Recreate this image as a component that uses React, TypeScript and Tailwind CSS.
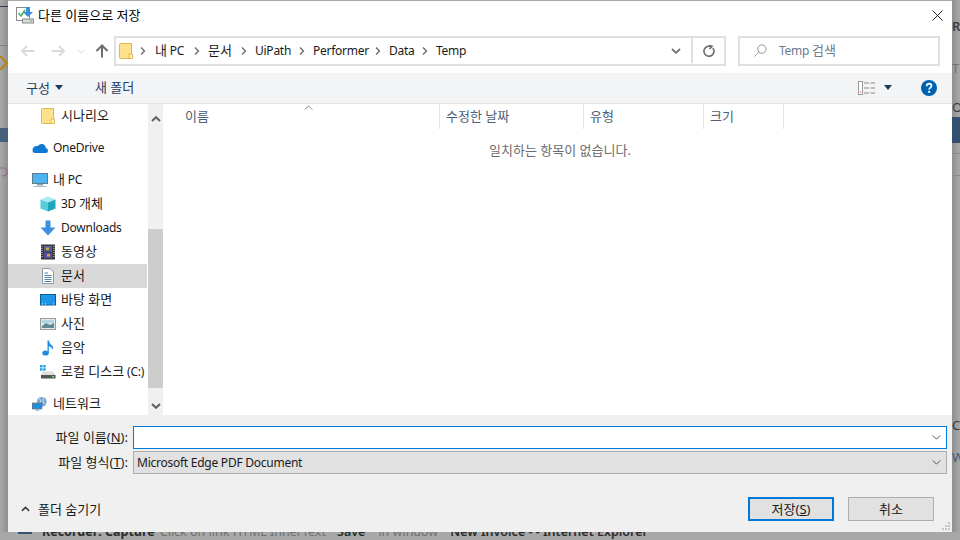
import type { ReactNode } from "react";

const Ko = ({ children }: { children: ReactNode }) => <span className="text-[13px] tracking-normal">{children}</span>;

function FolderIcon({ className }: { className?: string }) {
  return (
    <svg viewBox="0 0 14 16" className={className}>
      <path d="M0.5 1.5 Q0.5 0.5 1.5 0.5 H12.5 V15.5 H1.5 Q0.5 15.5 0.5 14.5 Z" fill="#fde18c" stroke="#e2b84e" />
      <path d="M10 15.5 V11 H13.5 V15.5 Z" fill="#fff2c2" stroke="#e2b84e" />
    </svg>
  );
}

function SaveIcon() {
  return (
    <svg viewBox="0 0 18 18" className="h-[18px] w-[18px] shrink-0">
      <rect x="0.5" y="1.5" width="13" height="13" fill="#fff" stroke="#8a8a8a" />
      <path d="M2.5 7 L5 10 L9 4" fill="none" stroke="#46b35a" strokeWidth="1.6" />
      <path d="M10 1 H14 V6 H17 L12 11 L7 6 H10 Z" fill="#3b8fd9" />
      <rect x="6.5" y="13" width="11" height="4" fill="#d8d8d8" stroke="#8a8a8a" />
      <rect x="14" y="14.5" width="2" height="1" fill="#4fd05f" />
    </svg>
  );
}

const OneDriveIcon = (
  <svg viewBox="0 0 16 12" className="h-3 w-4">
    <path d="M3 11 H14 Q16 11 16 8.5 Q16 6.5 14 6.2 Q13.4 2.2 9.8 2 Q7.4 1.8 6 4 Q1 3.4 0.5 8 Q0.5 11 3 11 Z" fill="#0f78d4" />
  </svg>
);

const PcIcon = (
  <svg viewBox="0 0 16 16" className="h-4 w-4">
    <rect x="0.5" y="1.5" width="15" height="10" fill="#4db5f2" stroke="#5f7d90" />
    <rect x="5" y="12" width="6" height="1.5" fill="#8fa3ad" />
    <rect x="2" y="14" width="12" height="1" fill="#a9b7be" />
  </svg>
);

const CubeIcon = (
  <svg viewBox="0 0 16 16" className="h-4 w-4">
    <path d="M8 0.5 L15.5 3.5 L8 6.5 L0.5 3.5 Z" fill="#a7ecf3" />
    <path d="M0.5 3.5 L8 6.5 V15.5 L0.5 12.5 Z" fill="#58cbd9" />
    <path d="M15.5 3.5 L8 6.5 V15.5 L15.5 12.5 Z" fill="#1ea5b9" />
  </svg>
);

const DownloadIcon = (
  <svg viewBox="0 0 16 16" className="h-4 w-4">
    <path d="M5.5 0.5 H10.5 V7.5 H15.5 L8 15.5 L0.5 7.5 H5.5 Z" fill="#3d8fe0" />
  </svg>
);

const FilmIcon = (
  <svg viewBox="0 0 14 16" className="h-4 w-[14px]">
    <rect x="0" y="0.5" width="14" height="15" fill="#3a3a3a" />
    <rect x="3" y="2" width="8" height="5.5" fill="#4a63a8" />
    <rect x="3" y="8.5" width="8" height="5.5" fill="#5a4aa0" />
    <rect x="5" y="3.5" width="3" height="2.5" fill="#d6a838" />
    <rect x="6" y="10" width="3" height="2.5" fill="#d6a838" />
    <path d="M1 2 V14 M13 2 V14" stroke="#cfcfcf" strokeWidth="1" strokeDasharray="1 1" />
  </svg>
);

const DocIcon = (
  <svg viewBox="0 0 14 16" className="h-4 w-[14px]">
    <path d="M1.5 0.5 H9 L12.5 4 V15.5 H1.5 Z" fill="#fff" stroke="#8c9aa5" />
    <path d="M3.5 5 H7 M3.5 7.5 H10.5 M3.5 9.5 H10.5 M3.5 11.5 H10.5 M3.5 13.5 H10.5" stroke="#5a7f9c" />
  </svg>
);

const DesktopIcon = (
  <svg viewBox="0 0 16 14" className="h-[14px] w-4">
    <rect x="0.5" y="1.5" width="15" height="10.5" fill="#1d96e8" stroke="#0b5e9e" />
    <path d="M2 11 H3 M5 11 H6 M13 11 H14" stroke="#e8f4fc" />
  </svg>
);

const PictureIcon = (
  <svg viewBox="0 0 16 14" className="h-[14px] w-4">
    <rect x="0.5" y="1.5" width="15" height="11" fill="#dbe8ee" stroke="#9a9a9a" />
    <path d="M2 9 L6 6 L10 8 L14 6 V11 H2 Z" fill="#5d8a8f" />
    <rect x="2" y="3" width="12" height="3" fill="#b5d4e6" />
  </svg>
);

const MusicIcon = (
  <svg viewBox="0 0 14 16" className="h-4 w-[14px]">
    <ellipse cx="4.5" cy="13" rx="3.2" ry="2.6" fill="#1d8ce0" />
    <path d="M6.5 13 V0.5 H7.8 Q8.4 4 11.5 6 Q12.8 7.5 11.8 9.5 Q11.4 7.5 7.8 6 V13 Z" fill="#1d8ce0" />
  </svg>
);

const DiskIcon = (
  <svg viewBox="0 0 16 14" className="h-[14px] w-4">
    <rect x="0" y="0" width="2.5" height="2.5" fill="#22a5e8" />
    <rect x="3.2" y="0" width="2.5" height="2.5" fill="#22a5e8" />
    <rect x="0" y="3.2" width="2.5" height="2.5" fill="#22a5e8" />
    <rect x="3.2" y="3.2" width="2.5" height="2.5" fill="#22a5e8" />
    <path d="M3 6.5 H13 L15.5 10 H1 Z" fill="#dfdfdf" />
    <rect x="1" y="10" width="14.5" height="3.5" fill="#555" />
    <rect x="12" y="11" width="2" height="1.5" fill="#5fe05f" />
  </svg>
);

const NetworkIcon = (
  <svg viewBox="0 0 18 16" className="h-4 w-[18px]">
    <circle cx="11" cy="5.5" r="5.5" fill="#7aa9d4" />
    <path d="M8 2 Q11 4 9 7 M13 1.5 Q11 5 14 8" stroke="#d7e6f2" fill="none" />
    <rect x="0.5" y="7" width="10.5" height="6.5" fill="#1f8ee0" stroke="#52738c" />
    <rect x="4" y="14" width="4" height="1.5" fill="#8fa3ad" />
  </svg>
);

interface NavRow {
  label: ReactNode;
  icon: ReactNode;
  indent?: boolean;
  gapAfter?: boolean;
  active?: boolean;
}

const NAV_ROWS: NavRow[] = [
  { label: <Ko>시나리오</Ko>, icon: <FolderIcon className="h-4 w-[14px]" />, indent: true, gapAfter: true },
  { label: "OneDrive", icon: OneDriveIcon, gapAfter: true },
  { label: <>
    <Ko>내</Ko> PC
  </>, icon: PcIcon },
  { label: <>
    3D <Ko>개체</Ko>
  </>, icon: CubeIcon, indent: true },
  { label: "Downloads", icon: DownloadIcon, indent: true },
  { label: <Ko>동영상</Ko>, icon: FilmIcon, indent: true },
  { label: <Ko>문서</Ko>, icon: DocIcon, indent: true, active: true },
  { label: <Ko>바탕 화면</Ko>, icon: DesktopIcon, indent: true },
  { label: <Ko>사진</Ko>, icon: PictureIcon, indent: true },
  { label: <Ko>음악</Ko>, icon: MusicIcon, indent: true },
  { label: <>
    <Ko>로컬 디스크</Ko> (C:)
  </>, icon: DiskIcon, indent: true, gapAfter: true },
  { label: <Ko>네트워크</Ko>, icon: NetworkIcon },
];

// widths keep the path segments on the same pixels as the real address bar
const CRUMBS: { label: ReactNode; width: string }[] = [
  { label: <>
    <Ko>내</Ko> PC
  </>, width: "w-[31px]" },
  { label: <Ko>문서</Ko>, width: "w-[25px]" },
  { label: "UiPath", width: "w-[36px]" },
  { label: "Performer", width: "w-[54px]" },
  { label: "Data", width: "w-[25px]" },
  { label: "Temp", width: "w-[30px]" },
];

function CrumbChevron() {
  return (
    <svg viewBox="0 0 6 8" className="h-2 w-1.5 shrink-0">
      <path d="M1 0.5 L4.5 4 L1 7.5" fill="none" stroke="#6d6d6d" strokeWidth="1.4" />
    </svg>
  );
}

function SmallChevron({ up, className, stroke = "#555" }: { up?: boolean; className?: string; stroke?: string }) {
  return (
    <svg viewBox="0 0 10 6" className={className}>
      <path d={up ? "M0.5 5.5 L5 1 L9.5 5.5" : "M0.5 0.5 L5 5 L9.5 0.5"} fill="none" stroke={stroke} strokeWidth="1.2" />
    </svg>
  );
}

function Sidebar() {
  return (
    <div className="flex h-[311px] w-[155px] shrink-0">
      <div className="w-[139px] overflow-hidden">
        {NAV_ROWS.map((row, i) => (
          <div
            key={i}
            className={`flex h-6 items-center gap-[5px] whitespace-nowrap pb-px text-[#1a1a1a] ${row.indent ? "pl-8" : "pl-6"} ${
              row.gapAfter ? "mb-2" : ""
            } ${row.active ? "bg-[#d9d9d9]" : ""}`}
          >
            <span className="flex h-4 w-4 shrink-0 items-center justify-center">{row.icon}</span>
            <span>{row.label}</span>
          </div>
        ))}
      </div>
      <div className="ml-px flex w-[15px] flex-col items-center bg-[#f0f0f0]">
        <div className="flex h-[18px] items-end">
          <svg viewBox="0 0 10 6" className="h-[6px] w-[10px]">
            <path d="M1 5 L5 1.2 L9 5" fill="none" stroke="#606060" strokeWidth="2" />
          </svg>
        </div>
        <div className="mt-[107px] h-[159px] w-full bg-[#cdcdcd]" />
        <div className="mt-[15px]">
          <svg viewBox="0 0 10 6" className="h-[6px] w-[10px]">
            <path d="M1 1 L5 4.8 L9 1" fill="none" stroke="#606060" strokeWidth="2" />
          </svg>
        </div>
      </div>
    </div>
  );
}

function FileList() {
  return (
    <div className="min-w-0 flex-1 bg-white">
      <div className="relative flex h-[25px] items-center text-[#4c607a]">
        <svg viewBox="0 0 10 6" className="absolute left-[141px] top-px h-[5px] w-[9px]">
          <path d="M0.5 5.5 L5 1 L9.5 5.5" fill="none" stroke="#6b6b6b" />
        </svg>
        <div className="flex h-full w-[276px] items-center pb-[2px] pl-[22px]">
          <Ko>이름</Ko>
        </div>
        <div className="flex h-full w-[144px] items-center border-l border-[#e5e5e5] pb-[2px] pl-[6px]">
          <Ko>수정한 날짜</Ko>
        </div>
        <div className="flex h-full w-[120px] items-center border-l border-[#e5e5e5] pb-[2px] pl-[6px]">
          <Ko>유형</Ko>
        </div>
        <div className="flex h-full w-[81px] items-center border-x border-[#e5e5e5] pb-[2px] pl-[6px]">
          <Ko>크기</Ko>
        </div>
      </div>
      <div className="mt-[13px] w-[794px] text-center text-[#6d6d6d]">
        <Ko>일치하는 항목이 없습니다.</Ko>
      </div>
    </div>
  );
}

function Footer() {
  return (
    <div className="flex h-[117px] flex-col bg-[#f0f0f0] pr-[5px] pt-[11px] text-[#1a1a1a]">
      <div className="flex h-[23px] items-center">
        <span className="w-[120px] whitespace-nowrap text-right">
          <Ko>파일 이름(<u>N</u>):</Ko>
        </span>
        <div className="ml-[5px] flex h-[23px] flex-1 items-center justify-end border border-[#0078d7] bg-white pr-[5px]">
          <SmallChevron className="h-[5px] w-[9px]" />
        </div>
      </div>
      <div className="mt-[2px] flex h-[23px] items-center">
        <span className="w-[120px] whitespace-nowrap text-right">
          <Ko>파일 형식(<u>T</u>):</Ko>
        </span>
        <div className="ml-[5px] flex h-[23px] flex-1 items-center justify-between border border-[#adadad] bg-[#e1e1e1] pl-[3px] pr-[5px]">
          <span>Microsoft Edge PDF Document</span>
          <SmallChevron className="h-[5px] w-[9px]" />
        </div>
      </div>
      <div className="relative mt-[23px] flex items-center justify-between">
        <div className="flex items-center gap-[8px] pl-[13px]">
          <svg viewBox="0 0 10 6" className="h-[6px] w-[9px]">
            <path d="M1 5 L5 1.2 L9 5" fill="none" stroke="#404040" strokeWidth="1.8" />
          </svg>
          <Ko>폴더 숨기기</Ko>
        </div>
        <div className="flex gap-[14px] pr-[13px]">
          <button className="h-6 w-[86px] border-2 border-[#0078d7] bg-[#e1e1e1]">
            <Ko>저장(<u>S</u>)</Ko>
          </button>
          <button className="h-6 w-[86px] border border-[#adadad] bg-[#e1e1e1]">
            <Ko>취소</Ko>
          </button>
        </div>
        <svg viewBox="0 0 9 9" className="absolute -bottom-[10px] right-[-4px] h-[9px] w-[9px]">
          <path d="M6 0 H8 V2 H6 Z M3 3 H5 V5 H3 Z M6 3 H8 V5 H6 Z M0 6 H2 V8 H0 Z M3 6 H5 V8 H3 Z M6 6 H8 V8 H6 Z" fill="#c4c4c4" />
        </svg>
      </div>
    </div>
  );
}

function Dialog() {
  return (
    <div className="flex h-[531px] w-[944px] shrink-0 flex-col bg-white">
      {/* Title */}
      <div className="flex h-[28px] items-center pl-2 pr-[8px] text-black">
        <SaveIcon />
        <span className="ml-[4px]">
          <Ko>다른 이름으로 저장</Ko>
        </span>
        <svg viewBox="0 0 12 12" className="ml-auto mr-[1px] h-[11px] w-[11px]">
          <path d="M0.5 0.5 L11.5 11.5 M11.5 0.5 L0.5 11.5" stroke="#111" strokeWidth="1" />
        </svg>
      </div>
      {/* Address row */}
      <div className="flex h-[44px] items-start pt-[7px]">
        <div className="flex h-[30px] w-[106px] shrink-0 items-center">
          <svg viewBox="0 0 14 12" className="ml-[13px] h-3 w-[14px]">
            <path d="M13.5 6 H1.5 M6 1 L1 6 L6 11" fill="none" stroke="#d9d9d9" strokeWidth="1.8" />
          </svg>
          <svg viewBox="0 0 14 12" className="ml-[16px] h-3 w-[14px]">
            <path d="M0.5 6 H12.5 M8 1 L13 6 L8 11" fill="none" stroke="#d9d9d9" strokeWidth="1.8" />
          </svg>
          <SmallChevron className="ml-[12px] h-[5px] w-2" stroke="#d9d9d9" />
          <svg viewBox="0 0 14 14" className="ml-[10px] h-[14px] w-[14px]">
            <path d="M7 13.5 V2 M1.5 7 L7 1.5 L12.5 7" fill="none" stroke="#6d6d6d" strokeWidth="2" />
          </svg>
        </div>
        <div className="flex h-[30px] w-[612px] shrink-0 items-center border-2 border-[#e0e0e0] pb-px pl-[3px] text-[#1a1a1a]">
          <FolderIcon className="h-4 w-[14px] shrink-0" />
          <div className="ml-[7px] flex items-center gap-2">
            {CRUMBS.map((crumb, i) => (
              <div key={i} className="flex items-center gap-2">
                <CrumbChevron />
                <span className={`whitespace-nowrap ${crumb.width} ${i === 0 ? "ml-px" : ""}`}>{crumb.label}</span>
              </div>
            ))}
          </div>
          <div className="ml-auto flex h-full items-center">
            <svg viewBox="0 0 10 6" className="mr-[10px] h-[6px] w-[10px]">
              <path d="M1 1 L5 4.8 L9 1" fill="none" stroke="#707070" strokeWidth="1.8" />
            </svg>
            <div className="flex h-full w-[33px] items-center justify-center border-l-2 border-[#e0e0e0]">
              <svg viewBox="0 0 12 12" className="h-[12px] w-[12px]">
                <path d="M9.8 3 A5 5 0 1 1 6 1.2 H8 M5.5 0 L9 1.4 L6.5 4" fill="none" stroke="#6d6d6d" strokeWidth="1.6" />
              </svg>
            </div>
          </div>
        </div>
        <div className="ml-[12px] flex h-[30px] w-[202px] shrink-0 items-center border-2 border-[#e0e0e0] pb-px pl-[14px] text-[#6d7a8a]">
          <svg viewBox="0 0 14 14" className="h-[13px] w-[13px]">
            <circle cx="8.5" cy="5.5" r="4.5" fill="none" stroke="#8a8a8a" />
            <path d="M5.2 8.8 L0.5 13.5" stroke="#c08a6a" />
          </svg>
          <span className="ml-[12px]">
            Temp <Ko>검색</Ko>
          </span>
        </div>
      </div>
      {/* Toolbar */}
      <div className="flex h-[31px] items-center border-b border-[#e5e5e5] bg-[#f3f4f6] pb-px pl-[18px] pr-[15px] text-[#1f3a5c]">
        <Ko>구성</Ko>
        <svg viewBox="0 0 8 5" className="ml-[5px] h-[5px] w-2">
          <path d="M0 0 H8 L4 5 Z" fill="#1f3a5c" />
        </svg>
        <span className="ml-[32px]">
          <Ko>새 폴더</Ko>
        </span>
        <svg viewBox="0 0 17 14" className="ml-auto h-[14px] w-[17px]">
          <rect x="0.5" y="0.5" width="4" height="13" fill="#fff" stroke="#9a9a9a" />
          <path d="M6 2 H11 M12.5 2 H17 M6 7 H11 M12.5 7 H17 M6 12 H11 M12.5 12 H17" stroke="#8a8a8a" />
          <rect x="2" y="10.5" width="1" height="1" fill="#d04040" />
        </svg>
        <svg viewBox="0 0 8 5" className="ml-[9px] h-[5px] w-2">
          <path d="M0 0 H8 L4 5 Z" fill="#1f3a5c" />
        </svg>
        <svg viewBox="0 0 16 16" className="ml-[29px] h-4 w-4">
          <circle cx="8" cy="8" r="8" fill="#0063b1" />
          <path d="M5.6 6.2 Q5.8 3.6 8.2 3.6 Q10.6 3.8 10.5 5.8 Q10.3 7.2 9 7.9 Q8.2 8.4 8.2 9.6" fill="none" stroke="#fff" strokeWidth="1.7" />
          <rect x="7.2" y="10.8" width="2" height="2" fill="#fff" />
        </svg>
      </div>
      {/* Main */}
      <div className="flex h-[311px]">
        <Sidebar />
        <FileList />
      </div>
      <Footer />
    </div>
  );
}

export default function App() {
  return (
    <div
      className="flex h-[540px] w-[960px] flex-col overflow-hidden bg-[#a8a8a8] text-[12px] leading-4 tracking-[-0.25px]"
      style={{ fontFamily: '"Noto Sans", "Noto Sans CJK KR", sans-serif' }}
    >
      <div className="flex h-[532px] shrink-0">
        {/* App behind the dialog, left edge */}
        <div className="relative w-2 shrink-0 bg-linear-to-r from-[#a9a9a9] to-[#8f8f8f]">
          <div className="absolute left-0 top-[6px] h-px w-2 bg-[#2b3a55]" />
          <div className="absolute left-0 top-[45px] h-px w-2 bg-[#808080]" />
          <svg viewBox="0 0 8 14" className="absolute left-0 top-[56px] h-[14px] w-2">
            <path d="M0 0 L7 7 L0 14" fill="none" stroke="#b8860b" strokeWidth="2" />
          </svg>
          <div className="absolute left-0 top-[128px] h-[14px] w-2 bg-[#46607c]" />
          <svg viewBox="0 0 8 12" className="absolute left-0 top-[165px] h-3 w-2">
            <path d="M0 3 H4 Q7 3 7 7 Q7 11 2 11" fill="none" stroke="#8a6a8a" strokeWidth="1.2" />
          </svg>
        </div>
        <div className="flex flex-col pt-px">
          <Dialog />
        </div>
        {/* right edge */}
        <div className="relative w-2 shrink-0 overflow-hidden bg-linear-to-r from-[#8f8f8f] to-[#a9a9a9] text-[13px] font-semibold text-[#3a3a3a]">
          <span className="absolute left-0 top-[18px]">Re</span>
          <span className="absolute left-0 top-[60px] font-normal text-[#707070]">Th</span>
          <span className="absolute left-0 top-[99px] font-normal">O</span>
          <div className="absolute left-0 top-[117px] h-[26px] w-2 bg-[#33506e]" />
          <div className="absolute left-0 top-[153px] h-px w-2 bg-[#8a8a8a]" />
          <div className="absolute left-0 top-[175px] h-px w-2 bg-[#8a8a8a]" />
          <span className="absolute left-0 top-[417px] font-normal">C</span>
          <span className="absolute left-0 top-[449px] font-normal text-[#3f5a7a]">W</span>
        </div>
      </div>
      {/* status line clipped by the dialog */}
      <div className="flex h-2 items-start gap-[9px] overflow-hidden whitespace-nowrap pl-[18px] text-[12.5px] tracking-normal text-[#2c2c2c]">
        <div className="h-[2px] w-[14px] bg-[#3a5070]" />
        <div className="-mt-[8px] flex pl-[1px]">
          <span className="font-bold">Recorder: Capture</span>
          <span className="ml-[5px] text-[#707070]">Click on link HTML InnerText</span>
          <span className="ml-[8px] font-semibold">'Save'</span>
          <span className="ml-[10px] text-[#707070]">in window</span>
          <span className="ml-[9px] font-semibold">'New Invoice - - Internet Explorer</span>
        </div>
      </div>
    </div>
  );
}
